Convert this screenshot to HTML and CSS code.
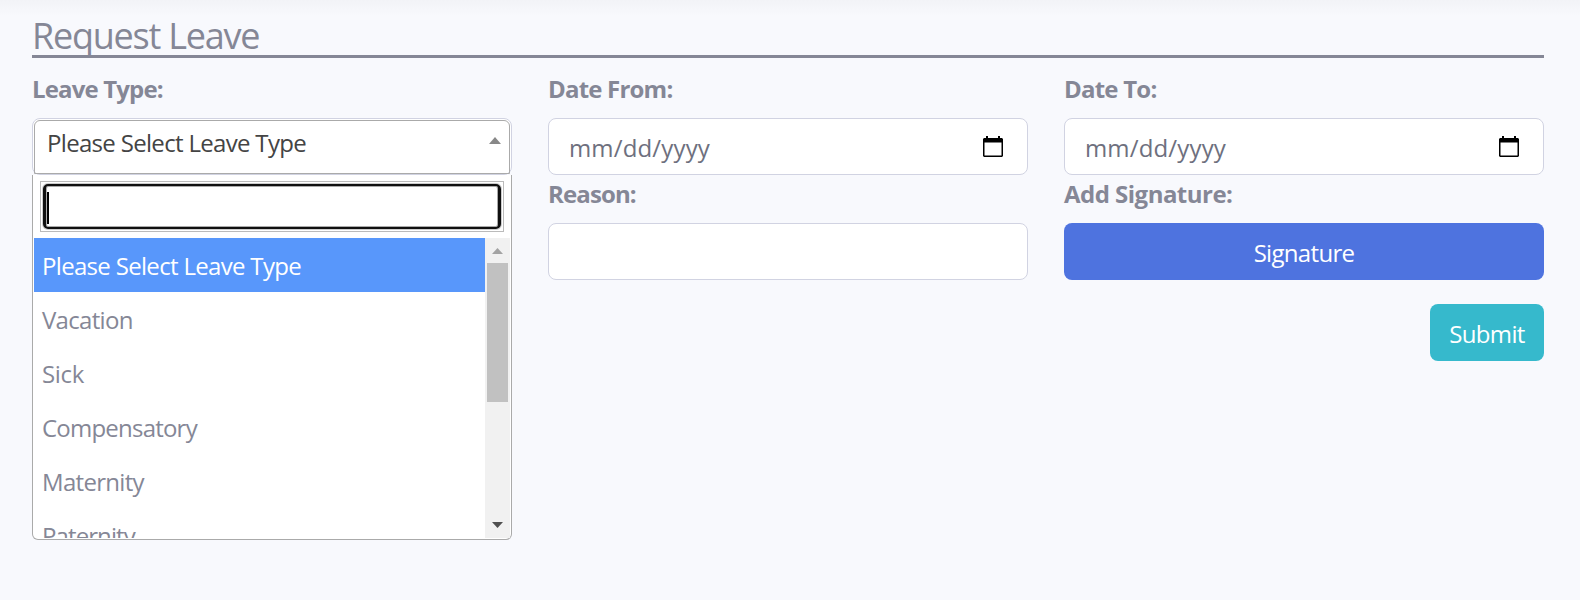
FILE: index.html
```html
<!DOCTYPE html>
<html lang="en">
<head>
<meta charset="utf-8">
<title>Request Leave</title>
<link rel="stylesheet" href="styles.css">
</head>
<body>
<main class="page">
  <h1 class="title"><span class="t-title">Request Leave</span></h1>
  <form class="grid">
    <div class="field">
      <label class="label"><span class="t-type">Leave Type:</span></label>
      <div class="control select-wrap">
        <div class="select">
          <span class="t-select">Please Select Leave Type</span>
          <svg class="caret" width="12" height="7" viewBox="0 0 12 7"><path d="M0 7 6 0l6 7z" fill="#888"/></svg>
        </div>
        <div class="dropdown">
          <div class="search"><div class="search-focus"><span class="cursor"></span></div></div>
          <div class="results">
            <ul class="options">
              <li class="option active"><span class="t-select">Please Select Leave Type</span></li>
              <li class="option"><span class="t-vac">Vacation</span></li>
              <li class="option"><span class="t-sick">Sick</span></li>
              <li class="option"><span class="t-comp">Compensatory</span></li>
              <li class="option"><span class="t-mat">Maternity</span></li>
              <li class="option"><span class="t-pat">Paternity</span></li>
            </ul>
            <div class="scrollbar">
              <svg width="11" height="6" viewBox="0 0 11 6"><path d="M0 6 5.500 0 11 6z" fill="#a3a3a3"/></svg>
              <div class="thumb"></div>
              <svg class="down" width="11" height="6" viewBox="0 0 11 6"><path d="M0 0h11L5.500 6z" fill="#505050"/></svg>
            </div>
          </div>
        </div>
      </div>
    </div>
    <div class="field">
      <label class="label"><span class="t-from">Date From:</span></label>
      <div class="control date">
        <span class="t-date">mm/dd/yyyy</span>
        <svg class="cal" width="20" height="21" viewBox="0 0 20 21"><path d="M1 2h2V0h2v2h10V0h2v2h2l1 1v17l-1 1H1l-1-1V3zM1.500 6.500v13h17v-13z" fill="#000" fill-rule="evenodd"/></svg>
      </div>
    </div>
    <div class="field">
      <label class="label"><span class="t-to">Date To:</span></label>
      <div class="control date">
        <span class="t-date">mm/dd/yyyy</span>
        <svg class="cal" width="20" height="21" viewBox="0 0 20 21"><path d="M1 2h2V0h2v2h10V0h2v2h2l1 1v17l-1 1H1l-1-1V3zM1.500 6.500v13h17v-13z" fill="#000" fill-rule="evenodd"/></svg>
      </div>
    </div>
    <div class="field reason">
      <label class="label"><span class="t-reason">Reason:</span></label>
      <div class="control"></div>
    </div>
    <div class="field">
      <label class="label"><span class="t-add">Add Signature:</span></label>
      <button type="button" class="btn primary"><span class="t-sig">Signature</span></button>
    </div>
  </form>
  <div class="actions"><button type="button" class="btn info"><span class="t-sig">Submit</span></button></div>
</main>
</body>
</html>
```
FILE: styles.css
```css
* { box-sizing: border-box; }
body {
  margin: 0;
  height: 600px;
  overflow: hidden;
  background: linear-gradient(#f2f3f7, #f8f9fd 16px);
  color: #858796;
  font: 24px/36px "Open Sans", "Noto Sans", sans-serif;
}
.page { padding: 14px 36px 0 32px; }
.title {
  margin: 0 0 13px;
  height: 44px;
  border-bottom: 3px solid #858796;
  font-size: 36px;
  font-weight: 400;
  line-height: 43px;
}
.title span, .label span, .control span, .btn span { white-space: nowrap; }
.grid {
  display: grid;
  grid-template-columns: repeat(3, 480px);
  column-gap: 36px;
}
.field { height: 105px; }
.reason { grid-column: 2; }
.label { display: block; height: 47px; line-height: 36px; font-weight: 700; }
.control {
  height: 57px;
  border: 1px solid #d1d3e2;
  border-radius: 8px;
  background: #fff;
}
.date {
  display: flex;
  align-items: center;
  justify-content: space-between;
  padding: 3px 24px 0 20px;
  color: #6e707e;
}
.cal { margin-top: -4px; }
.select-wrap { position: relative; padding: 1px; }
.select {
  display: flex;
  justify-content: space-between;
  height: 54px;
  padding: 4px 8px 0 12px;
  border: 1px solid #aaa;
  border-radius: 6px 6px 0 0;
  color: #444;
}
.caret { margin-top: 12px; }
.dropdown {
  position: absolute;
  top: 56px;
  left: -1px;
  width: 480px;
  height: 365px;
  padding: 6px 1px 1px;
  border: 1px solid #aaa;
  border-top: 0;
  border-radius: 0 0 6px 6px;
  background: #fff;
}
.search {
  height: 51px;
  margin: 0 6px 6px;
  padding: 2px;
  border: 1px solid #bbb;
}
.search-focus {
  height: 45px;
  padding: 6px 1px;
  border: 2px solid #101010;
  border-width: 2px 3px;
  border-radius: 5px;
  box-shadow: inset 0 0 0 1px #aaa, 0 0 0 1px #ccc;
}
.cursor { display: block; width: 2px; height: 32px; background: #000; }
.results { display: flex; height: 300px; }
.options { flex: 1; margin: 0; padding: 0; overflow: hidden; list-style: none; }
.option { height: 54px; padding: 10px 8px 8px; }
.active { background: #5897fb; color: #fff; }
.scrollbar {
  display: flex;
  flex-direction: column;
  align-items: center;
  width: 25px;
  padding: 10px 2px;
  background: #f1f1f1;
}
.thumb { width: 21px; height: 139px; margin-top: 9px; background: #c1c1c1; }
.down { margin-top: auto; }
.btn {
  height: 57px;
  padding: 3px 0 0;
  border: 0;
  border-radius: 8px;
  color: #fff;
  font: inherit;
}
.primary { width: 480px; background: #4e73df; }
.info { width: 114px; background: #36b9cc; }
.actions { display: flex; justify-content: flex-end; padding-top: 23px; }
.t-title { letter-spacing: -1.23px; }
.t-select { letter-spacing: -.68px; }
.t-type { letter-spacing: -.85px; }
.t-from { letter-spacing: -.8px; }
.t-to { letter-spacing: -.78px; }
.t-reason { letter-spacing: -.87px; }
.t-add { letter-spacing: -.52px; }
.t-date { letter-spacing: .15px; }
.t-sig { letter-spacing: -.68px; }
.t-vac { letter-spacing: -.7px; }
.t-sick { letter-spacing: -.3px; }
.t-comp { letter-spacing: -.78px; }
.t-mat { letter-spacing: -.7px; }
.t-pat { letter-spacing: -.9px; }
```
